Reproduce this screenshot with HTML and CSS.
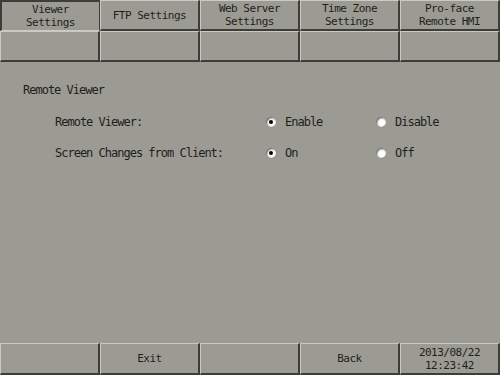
FILE: index.html
```html
<!DOCTYPE html>
<html lang="en">
<head>
    <meta charset="UTF-8">
    <meta name="viewport" content="width=device-width, initial-scale=1.0">
    <title>Viewer Settings</title>
    <link rel="stylesheet" href="styles.css">
</head>
<body>

    <div class="screen">
        <div class="tabs">
            <div class="key selected">Viewer<br>Settings</div>
            <div class="key">FTP Settings</div>
            <div class="key">Web Server<br>Settings</div>
            <div class="key">Time Zone<br>Settings</div>
            <div class="key">Pro-face<br>Remote HMI</div>
            <div class="key"></div>
            <div class="key"></div>
            <div class="key"></div>
            <div class="key"></div>
            <div class="key"></div>
        </div>

        <div class="panel">
            <div class="panel-title">Remote Viewer</div>

            <div class="row">
                <span class="row-label">Remote Viewer:</span>
                <span class="option"><span class="radio checked"></span>Enable</span>
                <span class="option"><span class="radio"></span>Disable</span>
            </div>

            <div class="row">
                <span class="row-label">Screen Changes from Client:</span>
                <span class="option"><span class="radio checked"></span>On</span>
                <span class="option"><span class="radio"></span>Off</span>
            </div>
        </div>

        <div class="footer">
            <div class="key"></div>
            <div class="key">Exit</div>
            <div class="key"></div>
            <div class="key">Back</div>
            <div class="key clock">2013/08/22<br>12:23:42</div>
        </div>
    </div>

</body>
</html>
```

FILE: styles.css
```css
body {
    margin: 0;
    background-color: #9c9b93;
    font-family: "DejaVu Sans Mono", monospace;
    font-size: 12px;
    letter-spacing: -1px;
    color: #1e1e1c;
}

.screen {
    width: 500px;
    height: 375px;
    display: flex;
    flex-direction: column;
}

.tabs,
.footer {
    display: grid;
    grid-template-columns: repeat(5, 100px);
}

.tabs {
    grid-auto-rows: 31px;
}

.footer {
    margin-top: auto;
    grid-auto-rows: 32px;
}

.key {
    box-sizing: border-box;
    display: flex;
    align-items: center;
    justify-content: center;
    text-align: center;
    font-size: 11px;
    letter-spacing: -0.5px;
    line-height: 13px;
    background-color: #9c9b93;
    border-top: 1px solid #cbcac2;
    border-left: 1px solid #cbcac2;
    border-right: 2px solid #3c3c38;
    border-bottom: 2px solid #3c3c38;
}

.key.selected {
    border-top: 2px solid #3c3c38;
    border-left: 2px solid #3c3c38;
    border-right: 1px solid #3c3c38;
    border-bottom: 1px solid #cbcac2;
}

.panel {
    padding: 20px 0 0 23px;
}

.panel-title {
    line-height: 16px;
    margin-bottom: 8px;
}

.row {
    display: flex;
    align-items: center;
    height: 31px;
    padding-left: 32px;
}

.row-label {
    width: 211px;
}

.option {
    display: flex;
    align-items: center;
    width: 110px;
}

.radio {
    width: 10px;
    height: 10px;
    border-radius: 50%;
    background-color: #ffffff;
    box-shadow: inset 1px 1px 2px #55554f, 0 0 1px #7a7972;
    margin-right: 9px;
    display: flex;
    align-items: center;
    justify-content: center;
}

.radio.checked::after {
    content: "";
    width: 4px;
    height: 4px;
    border-radius: 50%;
    background-color: #000000;
}
```
